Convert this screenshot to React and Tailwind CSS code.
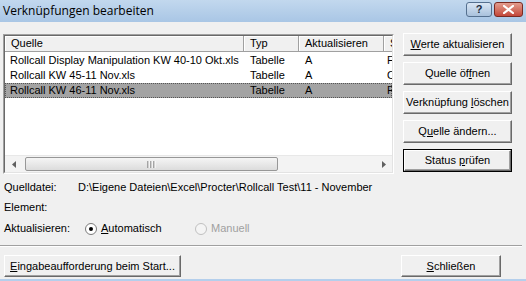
import React from "react";

const links = [
  { name: "Rollcall Display Manipulation KW 40-10 Okt.xls", type: "Tabelle", upd: "A", s: "F" },
  { name: "Rollcall KW 45-11 Nov.xls", type: "Tabelle", upd: "A", s: "O" },
  { name: "Rollcall KW 46-11 Nov.xls", type: "Tabelle", upd: "A", s: "F", selected: true },
];

// Accelerator letter, underlined like in the Windows dialog
const Key = ({ children }) => <span className="underline underline-offset-1">{children}</span>;

const WinButton = ({ children, className = "", isDefault = false }) => (
  <div
    className={`flex items-center justify-center bg-[#f0f0f0] ${
      isDefault ? "border border-black" : ""
    } ${className}`}
  >
    <div className="w-full h-full flex items-center justify-center border border-t-white border-l-white border-r-[#696969] border-b-[#696969] shadow-[inset_-1px_-1px_#a0a0a0]">
      {children}
    </div>
  </div>
);

const Radio = ({ checked, disabled }) => (
  <div
    className={`w-[12px] h-[12px] rounded-full border flex items-center justify-center ${
      disabled ? "border-[#c0c0c0] bg-[#f4f4f4]" : "border-[#7a7a7a] bg-white"
    }`}
  >
    {checked && <div className="w-[4px] h-[4px] rounded-full bg-black" />}
  </div>
);

const HeaderCell = ({ children, className = "" }) => (
  <div className={`h-full flex items-center border-r border-r-[#a0a0a0] shadow-[inset_1px_1px_#fff] px-[6px] shrink-0 ${className}`}>
    {children}
  </div>
);

export default function App() {
  return (
    <div
      className="w-[526px] h-[281px] bg-[#f0f0f0] flex flex-col text-[11px] text-black overflow-hidden"
      style={{ fontFamily: '"Liberation Sans", Arial, sans-serif' }}
    >
      {/* Title bar */}
      <div className="h-[22px] shrink-0 flex items-center justify-between pl-[3px] pr-[3px] bg-gradient-to-b from-[#c2d8ee] to-[#a9c6e5]">
        <span className="text-[12px] text-black" style={{ fontFamily: '"Open Sans", "Noto Sans", sans-serif' }}>
          Verknüpfungen bearbeiten
        </span>
        <div className="flex gap-[2px] items-center -mt-[3px]">
          <div className="w-[26px] h-[15px] rounded-[3px] border border-[#55708f] bg-gradient-to-b from-[#d9e6f4] to-[#a9c1dc] flex items-center justify-center text-[11px] font-bold text-[#1d2c40] leading-none">
            ?
          </div>
          <div className="w-[29px] h-[15px] rounded-[3px] border border-[#7a2a22] bg-gradient-to-b from-[#e29c8e] to-[#c3463a] flex items-center justify-center">
            <svg width="11" height="9" viewBox="0 0 11 9">
              <path d="M1 1 L10 8 M10 1 L1 8" stroke="#fff" strokeWidth="2.2" strokeLinecap="square" />
            </svg>
          </div>
        </div>
      </div>

      <div className="flex-1 flex flex-col px-[3px]">
        {/* List + buttons */}
        <div className="flex mt-[12px]">
          {/* List view */}
          <div className="w-[391px] h-[140px] flex flex-col border border-t-[#a0a0a0] border-l-[#a0a0a0] border-r-white border-b-white">
            <div className="flex-1 flex flex-col border border-t-[#696969] border-l-[#696969] border-r-[#e3e3e3] border-b-[#e3e3e3] bg-white overflow-hidden">
              <div className="h-[16px] flex bg-[#f0f0f0] border-b border-b-[#a0a0a0] shrink-0">
                <HeaderCell className="w-[239px]">Quelle</HeaderCell>
                <HeaderCell className="w-[55px]">Typ</HeaderCell>
                <HeaderCell className="w-[85px]">Aktualisieren</HeaderCell>
                <HeaderCell className="w-[20px] px-[3px]">S</HeaderCell>
              </div>
              <div className="flex-1 pt-[1px]">
                {links.map((l) => (
                  <div
                    key={l.name}
                    className={`h-[15px] flex items-center ${
                      l.selected ? "bg-[#a3a3a3] outline outline-1 outline-dotted outline-[#555] -outline-offset-1" : ""
                    }`}
                  >
                    <div className="w-[239px] pl-[5px] shrink-0 whitespace-nowrap overflow-hidden">{l.name}</div>
                    <div className="w-[55px] pl-[6px] shrink-0">{l.type}</div>
                    <div className="w-[85px] pl-[6px] shrink-0">{l.upd}</div>
                    <div className="w-[8px] pl-[3px] shrink-0 overflow-hidden">{l.s}</div>
                  </div>
                ))}
              </div>
              {/* Horizontal scrollbar */}
              <div className="h-[17px] shrink-0 flex items-stretch bg-[#f3f3f3] border-t border-t-[#e8e8e8]">
                <div className="w-[17px] flex items-center justify-center">
                  <svg width="4" height="7" viewBox="0 0 4 7">
                    <path d="M4 0 L0 3.5 L4 7 Z" fill="#606060" />
                  </svg>
                </div>
                <div className="flex-1 flex items-stretch py-[1px] pl-[3px]">
                  <div className="w-[253px] rounded-[2px] border border-[#979797] bg-gradient-to-b from-[#f5f5f5] to-[#dcdcdc] flex items-center justify-center">
                    <svg width="9" height="7" viewBox="0 0 9 7">
                      <path d="M1 0 V7 M4 0 V7 M7 0 V7" stroke="#606060" strokeWidth="1" />
                      <path d="M2 0 V7 M5 0 V7 M8 0 V7" stroke="#fff" strokeWidth="1" />
                    </svg>
                  </div>
                </div>
                <div className="w-[17px] flex items-center justify-center">
                  <svg width="4" height="7" viewBox="0 0 4 7">
                    <path d="M0 0 L4 3.5 L0 7 Z" fill="#606060" />
                  </svg>
                </div>
              </div>
            </div>
          </div>

          {/* Button column */}
          <div className="ml-[9px] flex flex-col gap-[6px] -mt-[1px]">
            <WinButton className="w-[109px] h-[23px]">
              <span><Key>W</Key>erte aktualisieren</span>
            </WinButton>
            <WinButton className="w-[109px] h-[23px]">
              <span>Quelle öf<Key>f</Key>nen</span>
            </WinButton>
            <WinButton className="w-[109px] h-[23px]">
              <span>Verknüpfung <Key>l</Key>öschen</span>
            </WinButton>
            <WinButton className="w-[109px] h-[23px]">
              <span>Q<Key>u</Key>elle ändern...</span>
            </WinButton>
            <WinButton className="w-[109px] h-[23px]" isDefault>
              <span>Status <Key>p</Key>rüfen</span>
            </WinButton>
          </div>
        </div>

        {/* Details */}
        <div className="flex flex-col pl-[1px] mt-[7px] gap-[7px]">
          <div className="flex h-[13px] items-center">
            <span className="w-[74px] shrink-0">Quelldatei:</span>
            <span>D:\Eigene Dateien\Excel\Procter\Rollcall Test\11 - November</span>
          </div>
          <div className="flex h-[13px] items-center">
            <span>Element:</span>
          </div>
          <div className="flex h-[13px] items-center mt-[1px]">
            <span className="w-[81px] shrink-0">Aktualisieren:</span>
            <div className="flex items-center gap-[4px] w-[110px]">
              <Radio checked />
              <span><Key>A</Key>utomatisch</span>
            </div>
            <div className="flex items-center gap-[4px] text-[#a0a0a0]">
              <Radio disabled />
              <span>Manuell</span>
            </div>
          </div>
        </div>

        {/* Separator */}
        <div className="mt-[10px] -ml-[3px] w-[522px] border-t border-t-[#a0a0a0] border-b border-b-white" />

        {/* Bottom buttons */}
        <div className="flex justify-between mt-[8px] pl-[1px] pr-[22px]">
          <WinButton className="w-[177px] h-[22px]">
            <span><Key>E</Key>ingabeaufforderung beim Start...</span>
          </WinButton>
          <WinButton className="w-[100px] h-[22px]">
            <span><Key>S</Key>chließen</span>
          </WinButton>
        </div>
      </div>

      <div className="h-[2px] shrink-0 bg-[#b4cfec]" />
    </div>
  );
}
